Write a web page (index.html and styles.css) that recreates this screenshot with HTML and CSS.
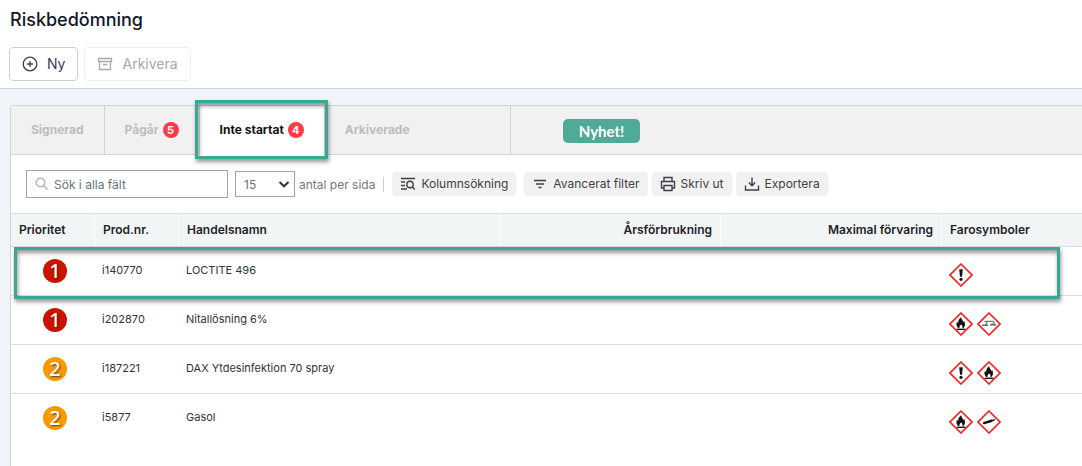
FILE: index.html
```html
<!DOCTYPE html>
<html lang="sv">
<head>
  <meta charset="UTF-8">
  <meta name="viewport" content="width=device-width, initial-scale=1">
  <title>Riskbedömning</title>
  <link rel="stylesheet" href="styles.css">
</head>
<body>
  <!-- shared hazard symbols -->
  <svg class="defs" aria-hidden="true">
    <symbol id="ghs-exclamation" viewBox="0 0 24 24">
      <path d="M12 1 23 12 12 23 1 12Z" fill="#fff" stroke="#f2201c" stroke-width="1.6"/>
      <path d="M10.2 6.2h3.6l-.8 7.6h-2z"/>
      <circle cx="12" cy="16.3" r="1.6"/>
    </symbol>
    <symbol id="ghs-flame" viewBox="0 0 24 24">
      <path d="M12 1 23 12 12 23 1 12Z" fill="#fff" stroke="#f2201c" stroke-width="1.6"/>
      <path d="M9.2 16C7.200 14.400 7 12 8 9.800l1.100 1.400c0-2.500 1.100-4.600 3.100-5.900 0 1.700 1.600 2.800 2.100 4.800l.9-1.100c1.300 2.800 1 5.400-.7 7h-1.100c.4-1.500-.2-2.400-1.200-3.500-1.300 1.100-2 2-1.700 3.500z"/>
      <path d="M7.800 16.600h8.600v1.400H7.800z"/>
    </symbol>
    <symbol id="ghs-corrosive" viewBox="0 0 24 24">
      <path d="M12 1 23 12 12 23 1 12Z" fill="#fff" stroke="#f2201c" stroke-width="1.6"/>
      <path d="M7.500 9.300h9M9.800 9.800l-.8 3M16.300 9.500l1 2.500" fill="none" stroke="#777" stroke-width="1.300"/>
      <path d="M4.800 13.300h6.200M13.200 13.300l2-.9 3.600.7" fill="none" stroke="#666" stroke-width="1.600"/>
    </symbol>
    <symbol id="ghs-gas" viewBox="0 0 24 24">
      <path d="M12 1 23 12 12 23 1 12Z" fill="#fff" stroke="#f2201c" stroke-width="1.6"/>
      <path d="M6.600 11.900l7.700-2.300 1.300.2 2.300-.7.400 1.200-2.200.8-1.100.9-7.700 2.300c-1.500 0-2-1.900-.7-2.400z"/>
    </symbol>
  </svg>

  <header class="page-header">
    <h1>Riskbedömning</h1>
    <div class="actions">
      <button class="btn" type="button">
        <svg class="icon" viewBox="0 0 16 16"><circle cx="8" cy="8" r="6.800"/><path d="M8 5v6M5 8h6"/></svg>
        Ny
      </button>
      <button class="btn" type="button" disabled>
        <svg class="icon" viewBox="0 0 16 16"><path d="M1.500 2.500h13v3h-13zM2.500 5.500v8h11v-8M6 8.500h4"/></svg>
        Arkivera
      </button>
    </div>
  </header>

  <main class="panel">
    <nav class="tabs">
      <a class="tab" href="#signerad">Signerad</a>
      <a class="tab" href="#pagar">Pågår <span class="count">5</span></a>
      <a class="tab active" href="#inte-startat">Inte startat <span class="count">4</span><span class="marker"></span></a>
      <a class="tab last" href="#arkiverade">Arkiverade</a>
      <span class="news">Nyhet!</span>
    </nav>

    <div class="toolbar">
      <label class="search">
        <svg viewBox="0 0 14 14"><circle cx="5.500" cy="5.500" r="4.300"/><path d="M8.800 8.800l3.700 3.700"/></svg>
        <input type="text" placeholder="Sök i alla fält" aria-label="Sök i alla fält">
      </label>
      <span class="select">
        <select id="page-size">
          <option>15</option>
          <option>25</option>
          <option>50</option>
        </select>
        <svg viewBox="0 0 12 12"><path d="M1.500 4l4.500 4.300L10.500 4"/></svg>
      </span>
      <label class="page-size-label" for="page-size">antal per sida</label>
      <button class="tool columns" type="button">
        <svg viewBox="0 0 16 16"><path d="M1 2.500h14M1 6h4M1 9.500h4M1 13h6M12.300 11l2.500 2.500"/><circle cx="10" cy="8.500" r="3.200"/></svg>
        Kolumnsökning
      </button>
      <button class="tool" type="button">
        <svg viewBox="0 0 16 16"><path d="M2 4.500h12M4 8h8M6.500 11.500h3"/></svg>
        Avancerat filter
      </button>
      <button class="tool" type="button">
        <svg viewBox="0 0 16 16"><path d="M4 5.500V1.500h8v4M4 12H1.500V5.500h13V12H12M4 9.500h8v5H4z"/></svg>
        Skriv ut
      </button>
      <button class="tool" type="button">
        <svg viewBox="0 0 16 16"><path d="M8 1.500v8M4.800 6.500L8 9.700l3.200-3.200M1.500 9.500v4.500h13V9.500"/></svg>
        Exportera
      </button>
    </div>

    <table>
      <colgroup>
        <col class="col-small">
        <col class="col-small">
        <col class="col-name">
        <col class="col-amount">
        <col class="col-amount">
        <col>
      </colgroup>
      <thead>
        <tr>
          <th>Prioritet</th>
          <th>Prod.nr.</th>
          <th>Handelsnamn</th>
          <th class="right">Årsförbrukning</th>
          <th class="right">Maximal förvaring</th>
          <th>Farosymboler</th>
        </tr>
      </thead>
      <tbody>
        <tr class="marked">
          <td class="prio"><span class="dot high">1</span><span class="marker"></span></td>
          <td>i140770</td>
          <td>LOCTITE 496</td>
          <td></td>
          <td></td>
          <td class="hazards"><svg><use href="#ghs-exclamation"/></svg></td>
        </tr>
        <tr>
          <td class="prio"><span class="dot high">1</span></td>
          <td>i202870</td>
          <td>Nitallösning 6%</td>
          <td></td>
          <td></td>
          <td class="hazards"><svg><use href="#ghs-flame"/></svg><svg><use href="#ghs-corrosive"/></svg></td>
        </tr>
        <tr>
          <td class="prio"><span class="dot medium">2</span></td>
          <td>i187221</td>
          <td>DAX Ytdesinfektion 70 spray</td>
          <td></td>
          <td></td>
          <td class="hazards"><svg><use href="#ghs-exclamation"/></svg><svg><use href="#ghs-flame"/></svg></td>
        </tr>
        <tr>
          <td class="prio"><span class="dot medium">2</span></td>
          <td>i5877</td>
          <td>Gasol</td>
          <td></td>
          <td></td>
          <td class="hazards"><svg><use href="#ghs-flame"/></svg><svg><use href="#ghs-gas"/></svg></td>
        </tr>
      </tbody>
    </table>
  </main>
</body>
</html>
```
FILE: styles.css
```css
* { box-sizing: border-box; }
html, body { height: 100%; }
body { margin: 0; display: flex; flex-direction: column; background: #f0f4f8; color: #1f2328; font-family: Inter, "Liberation Sans", sans-serif; font-size: 12px; overflow: hidden; }
button, input, select { font: inherit; color: inherit; }
svg { fill: none; stroke: currentColor; flex: none; }
.defs { position: absolute; width: 0; height: 0; }

.page-header { background: #fff; border-bottom: 1px solid #cbd5e4; padding: 8px 9px 7px; }
h1 { margin: 0 0 15px; padding-left: 1px; font-size: 18px; line-height: 24px; font-weight: 500; color: #111827; }
.actions { display: flex; gap: 6px; }
.btn { display: flex; align-items: center; gap: 9px; height: 34px; padding: 0 12px 1px; background: #fff; border: 1px solid #cfcfcf; border-radius: 4px; font-size: 14px; color: #374151; }
.btn:disabled { color: #a8a8a8; border-color: #efefef; }
.icon { width: 16px; height: 16px; stroke-width: 1.3; }

.panel { flex: 1; margin: 16px 0 0 10px; background: #fff; border: solid #d2d4d6; border-width: 1px 0 0 1px; border-top-left-radius: 4px; }

.tabs { display: flex; align-items: stretch; height: 49px; background: #f1f1f1; border-bottom: 1px solid #d2d4d6; border-top-left-radius: 4px; }
.tab { display: flex; align-items: center; gap: 4px; padding: 0 20px 1px; border-right: 1px solid #d2d4d6; color: #bdbdbd; font-size: 12px; font-weight: 700; text-decoration: none; }
.tab.active { position: relative; margin-bottom: -1px; padding-bottom: 2px; background: #fff; color: #111; }
.tab.last { width: 186px; }
.count { width: 16px; height: 16px; border-radius: 50%; background: #fa3c48; color: #fff; font-size: 11px; line-height: 16px; text-align: center; }
.news { align-self: center; margin: 2px 0 0 52px; padding: 0 16px; border-radius: 5px; background: #4dab97; color: #fff; font: 700 15px/24px Lato, sans-serif; }

/* green frame drawn over the highlighted tab and row */
.marker { position: absolute; z-index: 1; border: 3px solid #38a893; box-shadow: 1px 3px 4px rgba(0, 0, 0, .4), inset 1px 3px 4px rgba(0, 0, 0, .4); pointer-events: none; }
.tab .marker { inset: -6px -4px -4px -5px; }
.marked .marker { inset: 0 22px -3px 3px; }

.toolbar { display: flex; align-items: center; height: 58px; padding-left: 15px; color: #6b7280; }
.search { display: flex; align-items: center; width: 202px; height: 28px; padding: 0 8px; gap: 5px; border: 1px solid #a3a3a3; }
.search svg { width: 14px; height: 14px; stroke: #b5b5b5; stroke-width: 1.6; }
.search input { flex: 1; min-width: 0; padding: 0; border: 0; outline: 0; background: none; }
.search input::placeholder { color: #6b7280; }
.select { position: relative; margin: 0 4px 0 7px; }
.select svg { position: absolute; top: 7px; right: 5px; width: 12px; height: 12px; stroke: #333; stroke-width: 2; pointer-events: none; }
select { display: block; appearance: none; width: 60px; height: 26px; padding: 0 8px; border: 1px solid #a3a3a3; border-radius: 0; background: #fff; }
.page-size-label { padding-right: 8px; border-right: 1px solid #ccc; color: #777; }
.tool { display: flex; align-items: center; gap: 5px; height: 24px; margin-right: 4px; padding: 0 8px 1px; border: 0; border-radius: 4px; background: #f1f1f1; color: #3f3f46; white-space: nowrap; }
.tool svg { width: 16px; height: 16px; stroke-width: 1.4; }
.tool.columns { margin: 0 8px; }

table { width: 100%; table-layout: fixed; border-collapse: separate; border-spacing: 0; }
.col-small { width: 84px; }
.col-name { width: 321px; }
.col-amount { width: 221px; }
th { height: 34px; padding: 0 8px 2px; background: #f2f5f6; border: solid #dcdcdc; border-width: 1px 0; border-right: 1px solid #fff; font-size: 12px; font-weight: 600; text-align: left; }
th:last-child { border-right: 0; }
th.right { text-align: right; }
td { height: 49px; padding: 16px 7px 0; border-bottom: 1px solid #dcdcdc; color: #333; font-size: 11px; line-height: 14px; vertical-align: top; }
tbody tr:last-child td { border-bottom: 0; }
.marked { position: relative; }
td.prio { padding: 12px 4px 0 8px; }
.dot { display: block; width: 24px; height: 24px; margin: 0 auto; border-radius: 50%; color: #fff; font: 500 20px/24px "Noto Sans", sans-serif; text-align: center; text-shadow: 1px 1px 2px rgba(0, 0, 0, .6); }
.high { background: #c91400; }
.medium { background: #f99b00; }
.hazards svg { width: 24px; height: 24px; margin-right: 4px; fill: #111; stroke: none; }
```
